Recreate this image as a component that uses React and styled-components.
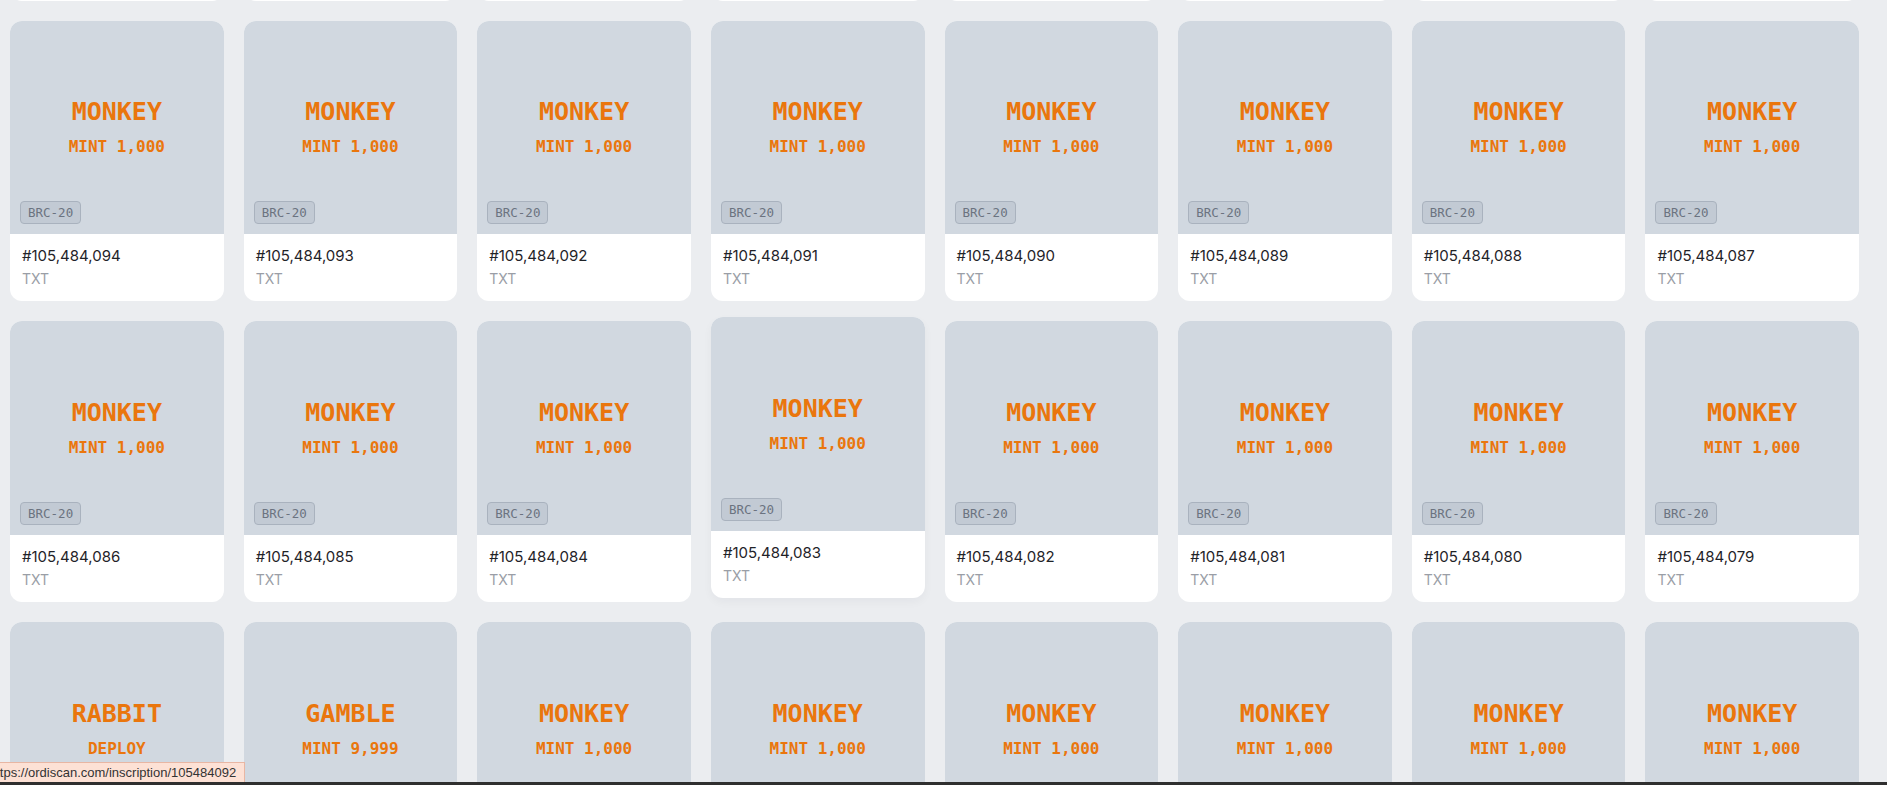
import React from "react";
import styled, { createGlobalStyle } from "styled-components";

const GlobalStyle = createGlobalStyle`
  html, body {
    margin: 0;
    padding: 0;
    background: #ebedf0;
    overflow: hidden;
  }
  body {
    font-family: Inter, "Liberation Sans", sans-serif;
  }
`;

const rowSpecs = [
  { start: 105484102, labels: {} },
  { start: 105484094, labels: {} },
  { start: 105484086, labels: {} },
  {
    start: 105484078,
    labels: {
      0: ["RABBIT", "DEPLOY"],
      1: ["GAMBLE", "MINT 9,999"],
    },
  },
];

const items = rowSpecs.flatMap((row) =>
  Array.from({ length: 8 }, (_, i) => {
    const [title, sub] = row.labels[i] || ["MONKEY", "MINT 1,000"];
    return { id: row.start - i, title, sub };
  })
);

const HOVERED = 105484083;

const App = () => {
  return (
    <>
      <GlobalStyle />
      <Grid>
        {items.map((item) => (
          <Card key={item.id} $hovered={item.id === HOVERED}>
            <Preview>
              <Title>{item.title}</Title>
              <Sub>{item.sub}</Sub>
              <Badge>BRC-20</Badge>
            </Preview>
            <Footer>
              <Number>#{item.id.toLocaleString("en-US")}</Number>
              <Kind>TXT</Kind>
            </Footer>
          </Card>
        ))}
      </Grid>
      <StatusTip>https://ordiscan.com/inscription/105484092</StatusTip>
      <BottomBar />
    </>
  );
};

const Grid = styled.main`
  display: grid;
  grid-template-columns: repeat(8, 1fr);
  column-gap: 20px;
  row-gap: 20px;
  padding: 0 28px 0 10px;
  margin-top: -280px;
`;

const Card = styled.a`
  display: flex;
  flex-direction: column;
  background: #fff;
  border-radius: 12px;
  overflow: hidden;
  text-decoration: none;
  transform: ${({ $hovered }) => ($hovered ? "translateY(-4px)" : "none")};
  box-shadow: ${({ $hovered }) =>
    $hovered ? "0 4px 10px rgba(15, 23, 42, 0.04)" : "none"};
`;

const Preview = styled.div`
  position: relative;
  aspect-ratio: 1 / 1;
  background: #d1d8e0;
  display: flex;
  flex-direction: column;
  align-items: center;
  justify-content: center;
  font-family: "DejaVu Sans Mono", "Liberation Mono", monospace;
  font-weight: 700;
  color: #ea760d;
`;

const Title = styled.div`
  font-size: 25px;
  line-height: 30px;
`;

const Sub = styled.div`
  font-size: 16px;
  line-height: 20px;
  margin-top: 10px;
`;

const Badge = styled.span`
  position: absolute;
  left: 10px;
  bottom: 10px;
  padding: 3px 7px;
  border: 1px solid #a9b2be;
  border-radius: 4px;
  background: #c2cad4;
  color: #6b7380;
  font-size: 12.5px;
  line-height: 15px;
  font-weight: 400;
`;

const Footer = styled.div`
  height: 67px;
  box-sizing: border-box;
  padding: 13px 12px 0;
  display: flex;
  flex-direction: column;
  gap: 5px;
`;

const Number = styled.div`
  font-size: 15px;
  line-height: 18px;
  color: #1f2328;
`;

const Kind = styled.div`
  font-size: 14px;
  line-height: 17px;
  color: #9a9ea6;
`;

const StatusTip = styled.div`
  position: fixed;
  left: -11px;
  bottom: 3px;
  height: 20px;
  box-sizing: border-box;
  padding: 0 8px 0 0;
  background: #fde1d5;
  border: 1px solid #e8b6a3;
  border-left: none;
  border-bottom: none;
  font-family: "Liberation Sans", Arial, sans-serif;
  font-size: 13px;
  line-height: 19px;
  color: #333;
  white-space: nowrap;
`;

const BottomBar = styled.div`
  position: fixed;
  left: 0;
  right: 0;
  bottom: 0;
  height: 3px;
  background: #2f2f2f;
`;

export default App;
